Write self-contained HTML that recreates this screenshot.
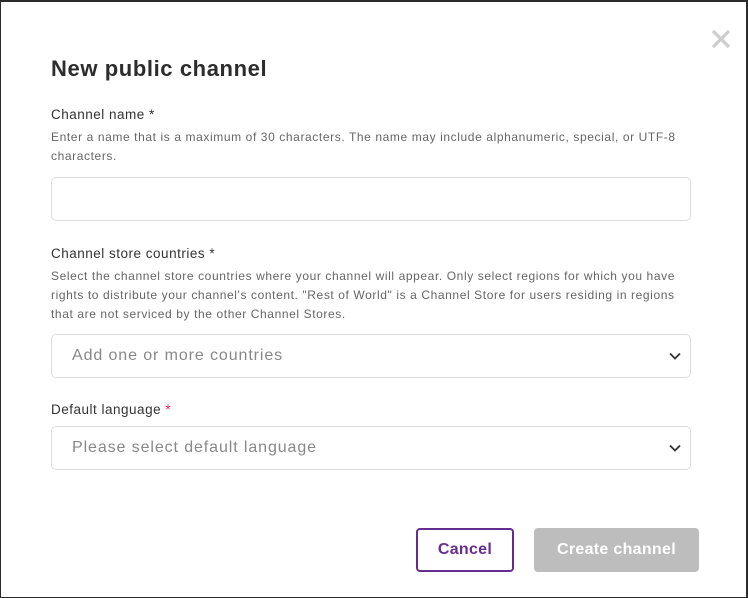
<!DOCTYPE html>
<html><head><meta charset="utf-8"><style>
*{margin:0;padding:0;box-sizing:border-box}
html,body{width:748px;height:598px;overflow:hidden;background:#fff}
body{font-family:"Liberation Sans",Arial,sans-serif;color:#333;position:relative}
.frame{position:absolute;left:0;top:0;width:748px;height:598px;border:1px solid #2b2b2b;border-top-width:2px;border-right-width:2px}
.t{position:absolute;white-space:nowrap}
.h1{left:51px;top:56px;font-size:22px;font-weight:bold;color:#2d2d2d;letter-spacing:0.6px}
.lab{left:51px;font-size:13.5px;color:#333;letter-spacing:0.5px}
.help{left:51px;font-size:12px;color:#666;letter-spacing:0.6px}
.box{position:absolute;left:51px;width:640px;height:44px;border:1px solid #ddd;border-radius:5px;background:#fff}
.ph{position:absolute;left:20px;top:12px;font-size:16px;color:#888;letter-spacing:0.9px}
.chev{position:absolute;right:8px;top:16px}
.btn{position:absolute;top:528px;height:44px;border-radius:4px;font-size:16px;font-weight:bold;text-align:center;line-height:44px;letter-spacing:0.3px}
</style></head><body>
<div class="frame"></div>
<svg style="position:absolute;left:711px;top:29px" width="20" height="20" viewBox="0 0 20 20"><path d="M2 2L18 18M18 2L2 18" stroke="#cdcdcd" stroke-width="3.2"/></svg>
<div class="t h1">New public channel</div>
<div class="t lab" style="top:107px">Channel name *</div>
<div class="t help" style="top:130px">Enter a name that is a maximum of 30 characters. The name may include alphanumeric, special, or UTF-8</div>
<div class="t help" style="top:149px">characters.</div>
<div class="box" style="top:177px"></div>
<div class="t lab" style="top:246px">Channel store countries *</div>
<div class="t help" style="top:269px">Select the channel store countries where your channel will appear. Only select regions for which you have</div>
<div class="t help" style="top:288px">rights to distribute your channel's content. "Rest of World" is a Channel Store for users residing in regions</div>
<div class="t help" style="top:307px">that are not serviced by the other Channel Stores.</div>
<div class="box" style="top:334px"><div class="ph">Add one or more countries</div>
<svg class="chev" width="14" height="10" viewBox="0 0 14 10"><path d="M2 2.5L7 7.5L12 2.5" stroke="#333" stroke-width="1.8" fill="none"/></svg></div>
<div class="t lab" style="top:402px">Default language <span style="color:#e0245e">*</span></div>
<div class="box" style="top:426px"><div class="ph">Please select default language</div>
<svg class="chev" width="14" height="10" viewBox="0 0 14 10"><path d="M2 2.5L7 7.5L12 2.5" stroke="#333" stroke-width="1.8" fill="none"/></svg></div>
<div class="btn" style="left:416px;width:98px;border:2px solid #662d91;color:#662d91;line-height:40px">Cancel</div>
<div class="btn" style="left:534px;width:165px;background:#bdbdbd;color:#fff">Create channel</div>
</body></html>
